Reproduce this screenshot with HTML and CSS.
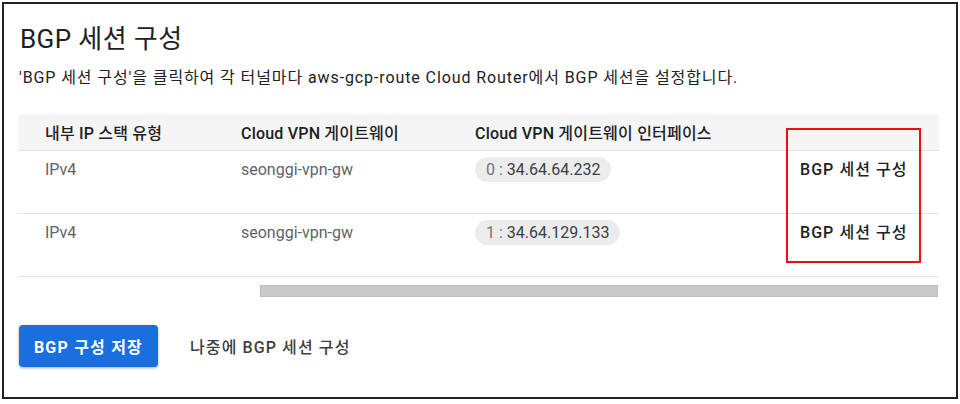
FILE: index.html
```html
<!DOCTYPE html>
<html lang="ko">
<head>
<meta charset="utf-8">
<link rel="stylesheet" href="styles.css">
</head>
<body>
<div class="frame">
  <h1 class="title">BGP 세션 구성</h1>
  <p class="desc">'BGP 세션 구성'을 클릭하여 각 터널마다 aws-gcp-route Cloud Router에서 BGP 세션을 설정합니다.</p>
  <div class="table">
    <div class="row head">
      <div class="cell">내부 IP 스택 유형</div>
      <div class="cell">Cloud VPN 게이트웨이</div>
      <div class="cell">Cloud VPN 게이트웨이 인터페이스</div>
      <div class="cell"></div>
    </div>
    <div class="row body">
      <div class="cell">IPv4</div>
      <div class="cell">seonggi-vpn-gw</div>
      <div class="cell"><span class="chip"><span class="idx">0 : </span>34.64.64.232</span></div>
      <div class="cell action">BGP 세션 구성</div>
    </div>
    <div class="row body">
      <div class="cell">IPv4</div>
      <div class="cell">seonggi-vpn-gw</div>
      <div class="cell"><span class="chip"><span class="idx">1 : </span>34.64.129.133</span></div>
      <div class="cell action">BGP 세션 구성</div>
    </div>
    <div class="highlight"></div>
  </div>
  <div class="scroll"><div class="thumb"></div></div>
  <div class="actions">
    <button class="primary">BGP 구성 저장</button>
    <span class="later">나중에 BGP 세션 구성</span>
  </div>
</div>
</body>
</html>
```

FILE: styles.css
```css
html, body {
  margin: 0;
  padding: 0;
  background: #ffffff;
}
body {
  width: 960px;
  height: 404px;
  overflow: hidden;
  font-family: Roboto, "Noto Sans CJK KR", sans-serif;
  color: #202124;
}
.frame {
  box-sizing: border-box;
  width: 956px;
  height: 397px;
  margin: 2px 0 0 2px;
  border: 2px solid #222222;
  padding: 19px 16px 0 14px;
  display: flex;
  flex-direction: column;
}
.title {
  margin: 0 0 0 2px;
  font-size: 26px;
  line-height: 32px;
  font-weight: 400;
  letter-spacing: 0.4px;
  color: #202124;
}
.desc {
  margin: 12px 0 0 1px;
  font-size: 16px;
  line-height: 22px;
  letter-spacing: 0.9px;
  color: #202124;
}
.table {
  position: relative;
  margin-top: 25px;
  width: 921px;
}
.row {
  display: grid;
  grid-template-columns: 196px 234px 325px 1fr;
  padding-left: 27px;
  border-bottom: 1px solid #e4e4e4;
  font-size: 16px;
}
.row.head {
  height: 36px;
  align-items: center;
  background: #f5f5f5;
  font-weight: 500;
  letter-spacing: 0.2px;
  color: #202124;
}
.row.body {
  height: 63px;
  box-sizing: border-box;
  padding-top: 6px;
  line-height: 25px;
  color: #5f6368;
}
.chip {
  display: inline-block;
  height: 25px;
  line-height: 25px;
  padding: 0 11px;
  border-radius: 13px;
  background: #ececec;
  color: #3c4043;
}
.chip .idx {
  color: #6f7377;
}
.action {
  font-weight: 500;
  color: #202124;
  letter-spacing: 1.05px;
}
.highlight {
  position: absolute;
  left: 768px;
  top: 14px;
  width: 131px;
  height: 131px;
  border: 2px solid #f00c14;
}
.scroll {
  margin-top: 8px;
  padding-left: 242px;
  width: 920px;
  box-sizing: border-box;
}
.thumb {
  height: 12px;
  background: #c9c9c9;
  box-shadow: inset 0 0 0 1px #bdbdbd;
}
.actions {
  margin-top: 28px;
  display: flex;
  align-items: center;
  gap: 32px;
  padding-left: 1px;
}
.primary {
  width: 139px;
  height: 42px;
  border: none;
  border-radius: 4px;
  background: #1a6fe0;
  color: #ffffff;
  font-family: Roboto, "Noto Sans CJK KR", sans-serif;
  font-size: 16px;
  font-weight: 700;
  letter-spacing: 1.2px;
  box-shadow: 0 1px 3px rgba(0, 0, 0, 0.35);
  padding: 0;
}
.later {
  font-size: 16px;
  color: #3c4043;
  font-weight: 500;
  letter-spacing: 1.1px;
}
```
